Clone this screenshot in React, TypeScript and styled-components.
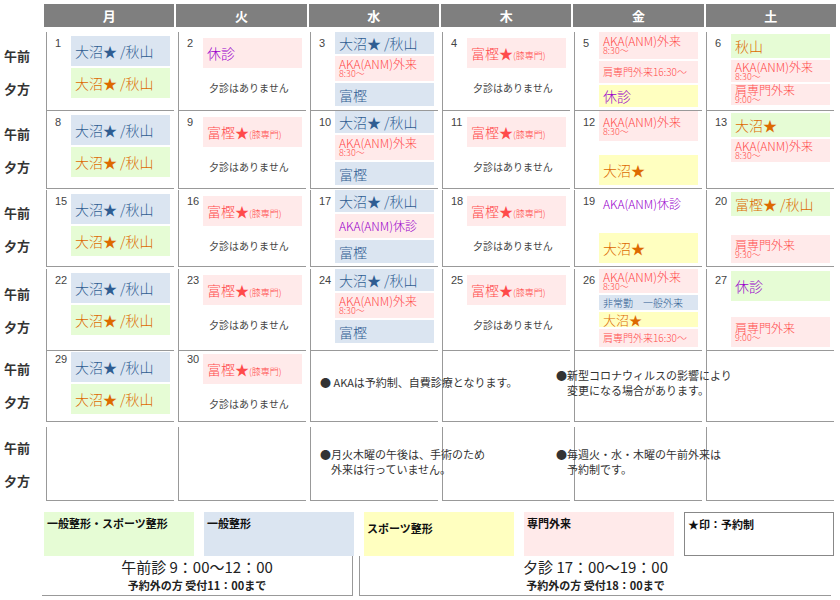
import styled, { createGlobalStyle } from 'styled-components';

type Bg = 'blue' | 'green' | 'pink' | 'yellow' | 'none';
type Tone = 'blue' | 'orange' | 'red' | 'purple';
type Slot = {
  bg?: Bg;
  tone?: Tone;
  text?: string;
  paren?: string;
  sub?: string;
  size?: number;
  h?: number;
  note?: string;
  grow?: boolean;
};
type Day = { n?: number; slots: Slot[]; pad?: number };

const BG: Record<Bg, string> = {
  blue: '#dbe5f1',
  green: '#e6fcd5',
  pink: '#ffeaea',
  yellow: '#ffffc0',
  none: 'transparent',
};
const TONE: Record<Tone, string> = {
  blue: '#2f5d92',
  orange: '#dd6a00',
  red: '#ff4a4a',
  purple: '#9900cc',
};

const FONT = `'Noto Sans CJK JP', 'Liberation Sans', sans-serif`;

const GlobalStyle = createGlobalStyle`
  body {
    margin: 0;
    background: #fff;
    font-family: ${FONT};
    color: #333;
  }
`;

const onuma: Slot[] = [
  { bg: 'blue', tone: 'blue', text: '大沼★ /秋山', h: 30 },
  { bg: 'green', tone: 'orange', text: '大沼★ /秋山', h: 30 },
];
const tomigashi = (n: number): Day => ({
  n,
  pad: 6,
  slots: [
    { bg: 'pink', tone: 'red', text: '富樫★', paren: '(膝専門)', h: 30 },
    { note: '夕診はありません' },
  ],
});
const wed = (n: number, mid: Slot): Day => ({
  n,
  pad: 0,
  slots: [
    { bg: 'blue', tone: 'blue', text: '大沼★ /秋山', h: 22 },
    mid,
    { bg: 'blue', tone: 'blue', text: '富樫', h: 23 },
  ],
});
const aka: Slot = { bg: 'pink', tone: 'red', text: 'AKA(ANM)外来', sub: '8:30〜', size: 12, h: 25 };

const weeks: Day[][] = [
  [
    { n: 1, slots: onuma },
    { n: 2, pad: 6, slots: [{ bg: 'pink', tone: 'purple', text: '休診', h: 30 }, { note: '夕診はありません' }] },
    wed(3, aka),
    tomigashi(4),
    {
      n: 5,
      pad: 0,
      slots: [
        { ...aka, h: 27 },
        { bg: 'pink', tone: 'red', text: '肩専門外来16:30〜', size: 10, h: 22 },
        { bg: 'yellow', tone: 'purple', text: '休診', h: 22 },
      ],
    },
    {
      n: 6,
      pad: 2,
      slots: [
        { bg: 'green', tone: 'orange', text: '秋山', h: 24 },
        { bg: 'pink', tone: 'red', text: 'AKA(ANM)外来', sub: '8:30〜', size: 12, h: 22 },
        { bg: 'pink', tone: 'red', text: '肩専門外来', sub: '9:00〜', size: 12, h: 21 },
      ],
    },
  ],
  [
    { n: 8, slots: onuma },
    tomigashi(9),
    wed(10, aka),
    tomigashi(11),
    {
      n: 12,
      pad: 0,
      slots: [{ ...aka, h: 30 }, { grow: true }, { bg: 'yellow', tone: 'orange', text: '大沼★', h: 30 }],
    },
    {
      n: 13,
      pad: 2,
      slots: [
        { bg: 'green', tone: 'orange', text: '大沼★', h: 24 },
        { ...aka, h: 23 },
      ],
    },
  ],
  [
    { n: 15, slots: onuma },
    tomigashi(16),
    wed(17, { bg: 'pink', tone: 'purple', text: 'AKA(ANM)休診', size: 12, h: 24 }),
    tomigashi(18),
    {
      n: 19,
      pad: 2,
      slots: [
        { bg: 'none', tone: 'purple', text: 'AKA(ANM)休診', size: 12, h: 24 },
        { grow: true },
        { bg: 'yellow', tone: 'orange', text: '大沼★', h: 30 },
      ],
    },
    {
      n: 20,
      pad: 2,
      slots: [
        { bg: 'green', tone: 'orange', text: '富樫★ /秋山', h: 24 },
        { grow: true },
        { bg: 'pink', tone: 'red', text: '肩専門外来', sub: '9:30〜', size: 12, h: 28 },
      ],
    },
  ],
  [
    { n: 22, slots: onuma },
    tomigashi(23),
    wed(24, aka),
    tomigashi(25),
    {
      n: 26,
      pad: 0,
      slots: [
        { ...aka, h: 24 },
        { bg: 'blue', tone: 'blue', text: '非常勤　一般外来', size: 10, h: 15 },
        { bg: 'yellow', tone: 'orange', text: '大沼★', size: 13, h: 15 },
        { bg: 'pink', tone: 'red', text: '肩専門外来16:30〜', size: 10, h: 18 },
      ],
    },
    {
      n: 27,
      pad: 2,
      slots: [
        { bg: 'green', tone: 'purple', text: '休診', h: 30 },
        { grow: true },
        { bg: 'pink', tone: 'red', text: '肩専門外来', sub: '9:00〜', size: 12, h: 30 },
      ],
    },
  ],
  [{ n: 29, slots: onuma }, tomigashi(30), { slots: [] }, { slots: [] }, { slots: [] }, { slots: [] }],
  [{ slots: [] }, { slots: [] }, { slots: [] }, { slots: [] }, { slots: [] }, { slots: [] }],
];

const notes: { row: number; items: { left: number; top: number; lines: string[] }[] }[] = [
  {
    row: 4,
    items: [
      { left: 320, top: 27, lines: ['● AKAは予約制、自費診療となります。'] },
      { left: 556, top: 20, lines: ['●新型コロナウィルスの影響により', '　変更になる場合があります。'] },
    ],
  },
  {
    row: 5,
    items: [
      { left: 320, top: 20, lines: ['●月火木曜の午後は、手術のため', '　外来は行っていません。'] },
      { left: 556, top: 20, lines: ['●毎週火・水・木曜の午前外来は', '　予約制です。'] },
    ],
  },
];

const days = ['月', '火', '水', '木', '金', '土'];

export default function App() {
  return (
    <>
      <GlobalStyle />
      <Page>
        <HeaderRow>
          {days.map((d) => (
            <HeaderCell key={d}>{d}</HeaderCell>
          ))}
        </HeaderRow>
        {weeks.map((week, wi) => (
          <WeekRow key={wi}>
            <Labels>
              <span>午前</span>
              <span>夕方</span>
            </Labels>
            {week.map((day, di) => (
              <Cell key={di}>
                <Num>{day.n ?? ''}</Num>
                <Slots $pad={day.pad ?? 4}>
                  {day.slots.map((s, si) =>
                    s.note ? (
                      <NoEvening key={si}>{s.note}</NoEvening>
                    ) : s.grow ? (
                      <Spacer key={si} />
                    ) : (
                      <Box key={si} $bg={BG[s.bg ?? 'none']} $h={s.h ?? 24} $tone={TONE[s.tone ?? 'blue']} $size={s.size ?? 14}>
                        <span>
                          {s.text}
                          {s.paren && <Paren>{s.paren}</Paren>}
                        </span>
                        {s.sub && <Sub>{s.sub}</Sub>}
                      </Box>
                    ),
                  )}
                </Slots>
              </Cell>
            ))}
            {notes
              .filter((n) => n.row === wi)
              .flatMap((n) => n.items)
              .map((it, i) => (
                <Notice key={i} style={{ left: it.left, top: it.top }}>
                  {it.lines.map((l) => (
                    <div key={l}>{l}</div>
                  ))}
                </Notice>
              ))}
          </WeekRow>
        ))}
        <Legend>
          <LegendBox $bg={BG.green}>一般整形・スポーツ整形</LegendBox>
          <LegendBox $bg={BG.blue}>一般整形</LegendBox>
          <LegendBox $bg={BG.yellow} $pt={8}>スポーツ整形</LegendBox>
          <LegendBox $bg={BG.pink}>専門外来</LegendBox>
          <LegendBox $bg="#fff" $border>★印：予約制</LegendBox>
        </Legend>
        <Hours>
          <HourBlock $divider>
            <HourMain>午前診 9：00〜12：00</HourMain>
            <HourSub>予約外の方 受付11：00まで</HourSub>
          </HourBlock>
          <HourBlock>
            <HourMain>夕診 17：00〜19：00</HourMain>
            <HourSub>予約外の方 受付18：00まで</HourSub>
          </HourBlock>
        </Hours>
      </Page>
    </>
  );
}

const Page = styled.div`
  width: 840px;
  padding-top: 4px;
`;

const HeaderRow = styled.div`
  display: grid;
  grid-template-columns: repeat(6, 1fr);
  column-gap: 2px;
  margin-left: 44px;
  width: 792px;
`;

const HeaderCell = styled.div`
  background: #7f7f7f;
  color: #fff;
  font-weight: bold;
  font-size: 13px;
  height: 23px;
  line-height: 23px;
  text-align: center;
`;

const WeekRow = styled.div`
  position: relative;
  display: grid;
  grid-template-columns: 42px repeat(6, 128px);
  column-gap: 4px;
  height: 74px;
  margin-top: 5px;
  &:first-of-type {
    margin-top: 6px;
  }
`;

const Labels = styled.div`
  display: flex;
  flex-direction: column;
  justify-content: center;
  gap: 14px;
  padding-left: 4px;
  font-size: 13px;
  font-weight: bold;
  color: #333;
`;

const Cell = styled.div`
  display: flex;
  border-left: 1px solid #999;
  border-bottom: 1px solid #999;
  box-sizing: border-box;
`;

const Num = styled.div`
  width: 24px;
  flex: none;
  padding: 5px 0 0 8px;
  box-sizing: border-box;
  font-family: 'Liberation Sans', sans-serif;
  font-size: 11px;
  color: #444;
`;

const Slots = styled.div<{ $pad: number }>`
  flex: 1;
  display: flex;
  flex-direction: column;
  gap: 2px;
  padding: ${(p) => p.$pad}px 4px 3px 0;
  min-width: 0;
`;

const Spacer = styled.div`
  flex: 1;
`;

const Box = styled.div<{ $bg: string; $h: number; $tone: string; $size: number }>`
  height: ${(p) => p.$h}px;
  flex: none;
  background: ${(p) => p.$bg};
  color: ${(p) => p.$tone};
  font-size: ${(p) => p.$size}px;
  font-weight: 300;
  line-height: 1;
  display: flex;
  flex-direction: column;
  justify-content: center;
  padding-left: 4px;
  white-space: nowrap;
  overflow: hidden;
`;

const Paren = styled.span`
  font-size: 9px;
`;

const Sub = styled.span`
  font-size: 9px;
  line-height: 0.95;
`;

const NoEvening = styled.div`
  font-size: 10px;
  color: #444;
  padding: 10px 0 0 6px;
`;

const Notice = styled.div`
  position: absolute;
  font-size: 11px;
  line-height: 15px;
  color: #333;
  white-space: nowrap;
`;

const Legend = styled.div`
  display: grid;
  grid-template-columns: repeat(5, 150px);
  column-gap: 10px;
  margin: 11px 0 0 44px;
`;

const LegendBox = styled.div<{ $bg: string; $border?: boolean; $pt?: number }>`
  height: 44px;
  box-sizing: border-box;
  background: ${(p) => p.$bg};
  border: ${(p) => (p.$border ? '1px solid #888' : 'none')};
  padding: ${(p) => p.$pt ?? 3}px 3px 0;
  font-size: 11px;
  font-weight: bold;
  color: #111;
`;

const Hours = styled.div`
  display: grid;
  grid-template-columns: 311px 472px;
  column-gap: 6px;
  margin-left: 42px;
`;

const HourBlock = styled.div<{ $divider?: boolean }>`
  text-align: center;
  border-bottom: 1px solid #999;
  border-right: ${(p) => (p.$divider ? '1px solid #999' : 'none')};
  border-left: ${(p) => (p.$divider ? 'none' : '1px solid #999')};
  padding: 1px 0 2px;
`;

const HourMain = styled.div`
  font-size: 15px;
  line-height: 20px;
  color: #222;
`;

const HourSub = styled.div`
  font-size: 11px;
  font-weight: bold;
  line-height: 16px;
  color: #222;
`;
